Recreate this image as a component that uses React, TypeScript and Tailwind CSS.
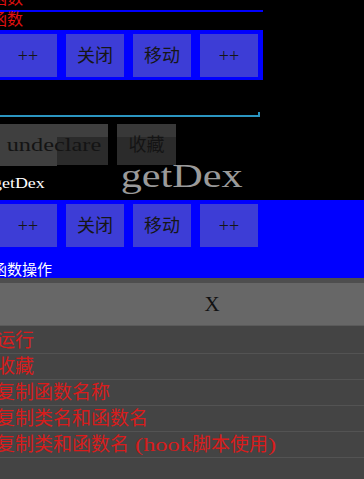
import React from "react";

const SERIF = { fontFamily: '"Liberation Serif", "Noto Sans CJK SC", serif' };

function BlueBtn({ label }: { label: string }) {
  return (
    <div className="w-[58px] h-[43px] shrink-0 bg-[#3d3dd6] flex items-center justify-center text-[18px] leading-none text-[#161616]">
      {label}
    </div>
  );
}

function BlueRow() {
  return (
    <div className="flex gap-[9px] -ml-[1px]">
      <BlueBtn label="++" />
      <BlueBtn label="关闭" />
      <BlueBtn label="移动" />
      <BlueBtn label="++" />
    </div>
  );
}

function Stretch({ children, className = "" }: { children: React.ReactNode; className?: string }) {
  return <span className={"inline-block scale-x-[1.28] " + className}>{children}</span>;
}

const rows: React.ReactNode[] = [
  "运行",
  "收藏",
  "复制函数名称",
  "复制类名和函数名",
  <>
    复制类和函数名
    <span className="inline-block w-[63px]">
      <Stretch className="origin-left whitespace-pre">{" (hook"}</Stretch>
    </span>
    脚本使用
    <span className="inline-block w-[8px]">
      <Stretch className="origin-left">)</Stretch>
    </span>
  </>,
];

export default function App() {
  return (
    <div className="w-[364px] h-[479px] bg-black overflow-hidden flex flex-col" style={SERIF}>
      {/* cut-off red label */}
      <div className="h-[10px] overflow-hidden">
        <div className="-mt-[10px] h-[18px] leading-[18px] text-[16px] text-[#e01010] -ml-[9px] whitespace-nowrap">函数</div>
      </div>
      <div className="h-[2px] w-[263px] bg-[#0000ff]" />
      <div className="h-[16px] leading-[16px] text-[16px] text-[#e01010] -ml-[9px] whitespace-nowrap">函数</div>
      <div className="h-[2px]" />
      <div className="w-[263px] h-[50px] bg-[#0000ff] pt-[4px]">
        <BlueRow />
      </div>
      <div className="h-[32px]" />
      <div className="w-[260px] h-[5px] border-b-2 border-r-2 border-[#2b95c0]" />
      <div className="h-[7px]" />
      {/* gray buttons */}
      <div className="flex gap-[9px] h-[41px]">
        <div className="relative w-[108px] h-[41px] bg-[#2b2b2b] flex items-center justify-center">
          <div className="absolute left-0 right-0 top-0 h-[13px] bg-[#3f3f3f]" />
          <div className="absolute left-0 top-0 w-[57px] h-[42px] bg-[#3f3f3f]" />
          <Stretch className="relative text-[19px] leading-none text-[#141414]">undeclare</Stretch>
        </div>
        <div className="relative w-[59px] h-[41px] bg-[#2b2b2b] flex items-center justify-center">
          <div className="absolute left-0 right-0 top-0 h-[13px] bg-[#383838]" />
          <span className="relative text-[18px] leading-none text-[#141414]">收藏</span>
        </div>
      </div>
      {/* getDex labels */}
      <div className="relative h-[35px]">
        <div className="pt-[6px] -ml-[7px]">
          <Stretch className="origin-left text-[14px] leading-none text-white">getDex</Stretch>
        </div>
        <div className="absolute left-0 right-0 top-[-5px] flex justify-center">
          <Stretch className="text-[33px] leading-none text-[#9a9a9a]">getDex</Stretch>
        </div>
      </div>
      {/* blue operation bar */}
      <div className="h-[78px] bg-[#0000ff] pt-[4px] flex flex-col">
        <BlueRow />
        <div className="mt-[13px] h-[20px] leading-[20px] text-[15px] text-white -ml-[8px] whitespace-nowrap">函数操作</div>
      </div>
      <div className="h-[5px] bg-[#4e4e4e]" />
      {/* dialog header */}
      <div className="h-[43px] bg-[#676767] border-b border-[#5a5a5a] flex items-center justify-center pl-[60px]">
        <span className="text-[21px] leading-none text-[#111]">X</span>
      </div>
      {/* menu list */}
      <div className="flex-1 bg-[#444444] pt-[2px]">
        {rows.map((r, i) => (
          <div key={i} className="h-[26px] border-b border-[#535353] leading-[25px] text-[19px] text-[#d81c1c] whitespace-nowrap">
            <span className="inline-block -ml-[4px]">{r}</span>
          </div>
        ))}
      </div>
    </div>
  );
}
